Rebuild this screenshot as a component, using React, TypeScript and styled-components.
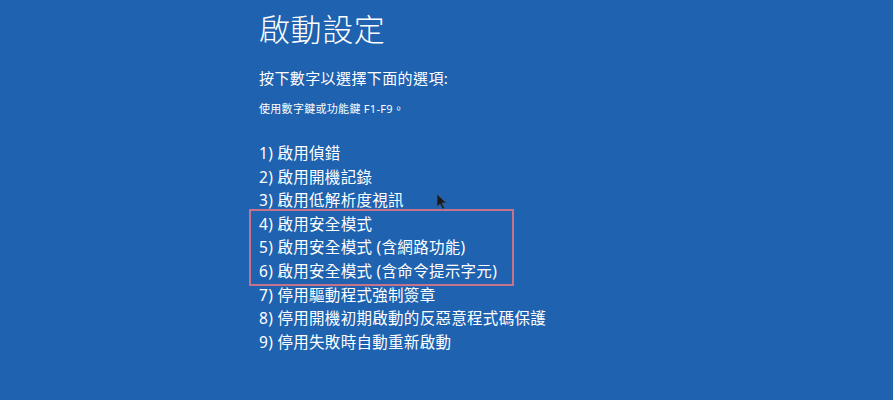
import styled, { createGlobalStyle } from 'styled-components';

const GlobalStyle = createGlobalStyle`
  html, body {
    margin: 0;
    padding: 0;
    background: #1e62b0;
  }
`

const Screen = styled.div`
  position: relative;
  width: 893px;
  height: 400px;
  background: #1e62b0;
  color: #ffffff;
  font-family: "Noto Sans", "Noto Sans CJK TC", sans-serif;
  box-sizing: border-box;
  padding: 10px 0 0 259px;
  overflow: hidden;
`

const Title = styled.h1`
  margin: 0;
  font-size: 31px;
  font-weight: 300;
  line-height: 38px;
  letter-spacing: 0.6px;
`

const Prompt = styled.p`
  margin: 20px 0 0;
  font-size: 15px;
  font-weight: 400;
  line-height: 20px;
  letter-spacing: 0.4px;
`

const Hint = styled.p`
  margin: 13px 0 0;
  font-size: 11px;
  line-height: 16px;
  letter-spacing: 0.3px;
`

const OptionList = styled.ol`
  list-style: none;
  margin: 25px 0 0;
  padding: 0;
`

const Option = styled.li`
  font-size: 15.5px;
  line-height: 23.6px;
  letter-spacing: 0.3px;
`

const Highlight = styled.div`
  width: 253px;
  margin: -4px 0 -2px -10px;
  padding: 2px 0 0 8px;
  border: 2px solid #c5728a;
`

const Pointer = styled.svg`
  position: absolute;
  left: 436px;
  top: 193px;
`

const before = ['1) 啟用偵錯', '2) 啟用開機記錄', '3) 啟用低解析度視訊']
const safe = ['4) 啟用安全模式', '5) 啟用安全模式 (含網路功能)', '6) 啟用安全模式 (含命令提示字元)']
const after = ['7) 停用驅動程式強制簽章', '8) 停用開機初期啟動的反惡意程式碼保護', '9) 停用失敗時自動重新啟動']

export default function App() {
  return (
    <>
      <GlobalStyle />
      <Screen>
        <Title>啟動設定</Title>
        <Prompt>按下數字以選擇下面的選項:</Prompt>
        <Hint>使用數字鍵或功能鍵 F1-F9。</Hint>
        <OptionList>
          {before.map((t) => <Option key={t}>{t}</Option>)}
          <Highlight>
            {safe.map((t) => <Option key={t}>{t}</Option>)}
          </Highlight>
          {after.map((t) => <Option key={t}>{t}</Option>)}
        </OptionList>
        <Pointer width="12" height="17" viewBox="0 0 12 17">
          <path d="M1 1 L1 14 L4 11 L6.5 16 L8.5 15 L6 10 L10.5 10 Z" fill="#1a1a1a" stroke="#3a5a8a" strokeWidth="0.8" />
        </Pointer>
      </Screen>
    </>
  )
}
